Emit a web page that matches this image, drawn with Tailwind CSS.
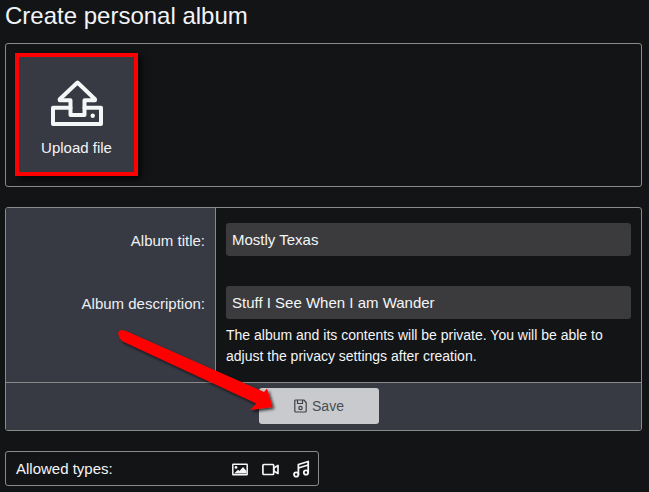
<!DOCTYPE html>
<html><head><meta charset="utf-8">
<script src="https://cdn.jsdelivr.net/npm/@tailwindcss/browser@4"></script>
</head>
<body class="bg-[#131416] m-0">
<div class="relative w-[649px] h-[492px] overflow-hidden bg-[#131416] font-['Liberation_Sans',Arial,sans-serif] text-white">
  <div class="h-[43px] pl-[5px] pt-[1px] text-[24px] leading-[29px] text-[#f2f4f7]">Create personal album</div>

  <section class="ml-[5px] w-[637px] h-[144px] border border-[#8a8a8a] rounded-[3px] p-[9px]">
    <div class="w-[123px] h-[123px] border-4 border-[#ff0000] bg-[#373943] shadow-[3px_3px_6px_rgba(0,0,0,0.8)] flex flex-col items-center">
      <svg class="mt-[23px]" width="52" height="46" viewBox="0 0 52 46" fill="none" stroke="#f4f6f8" stroke-width="4" stroke-linejoin="round" stroke-linecap="round">
        <path d="M19.500 27.700H2V44H50V27.700H33.500"/>
        <path d="M26.500 2.500 L44 19.300 V20.300 H33.500 V35 H19.500 V20.300 H8.700 V19.300 Z"/>
        <circle cx="41.700" cy="35.700" r="2.200" fill="#f4f6f8" stroke="none"/>
      </svg>
      <div class="mt-[11px] text-[15px] leading-[21px] text-[#f2f4f7]">Upload file</div>
    </div>
  </section>

  <section class="ml-[5px] mt-[20px] w-[637px] h-[224px] border border-[#8a8a8a] rounded-[3px] overflow-hidden flex flex-col">
    <div class="flex h-[175px] shrink-0 border-b border-[#8a8a8a]">
      <div class="w-[210px] bg-[#373943] border-r border-[#8a8a8a] pr-[10px] text-right text-[15px] leading-[21px] text-[#eef0f3]">
        <div class="pt-[22px]">Album title:</div>
        <div class="pt-[42px]">Album description:</div>
      </div>
      <div class="flex-1 pl-[10px] pr-[10px] pt-[15px]">
        <div class="h-[33px] bg-[#3b3b3d] rounded-[3px] pl-[6px] text-[15px] leading-[34px] text-[#f4f6f8]">Mostly Texas</div>
        <div class="mt-[30px] h-[33px] bg-[#3b3b3d] rounded-[3px] pl-[6px] text-[15px] leading-[34px] text-[#f4f6f8]">Stuff I See When I am Wander</div>
        <p class="mt-[6px] text-[14px] leading-[21px] text-[#f4f6f8]">The album and its contents will be private. You will be able to adjust the privacy settings after creation.</p>
      </div>
    </div>
    <div class="flex-1 bg-[#373943] pl-[253px] pt-[5px]">
      <div class="w-[120px] h-[36px] bg-[#c8cacd] rounded-[3px] flex items-center justify-center gap-[5px] text-[14px] text-[#4b4d52]">
        <svg width="13" height="14" viewBox="0 0 13 14" fill="none" stroke="#3f4146" stroke-width="1.200" stroke-linejoin="round">
          <path d="M0.800 2a1 1 0 0 1 1-1h8L12.200 3.500V12a1 1 0 0 1-1 1H1.800a1 1 0 0 1-1-1Z"/>
          <path d="M3.500 1v3.500h5V1"/>
          <circle cx="6.500" cy="9" r="1.700"/>
        </svg>
        <span>Save</span>
      </div>
    </div>
  </section>

  <section class="ml-[5px] mt-[20px] w-[314px] h-[35px] border border-[#8a8a8a] rounded-[3px] flex items-center pl-[10px] pt-[1px] text-[15px] text-[#f4f6f8]">
    <span>Allowed types:</span>
    <div class="ml-[119px] flex items-center gap-[14px]">
      <svg width="16" height="13" viewBox="0 0 16 13" fill="none" stroke="#f4f6f8" stroke-width="1.500">
        <rect x="0.800" y="1.200" width="14.400" height="10.600" rx="0.500"/>
        <circle cx="4" cy="4.400" r="1.400" fill="#f4f6f8" stroke="none"/>
        <path d="M2 10.500 6 6.800l1.500 1.200L11 4l3.500 4v2.500Z" fill="#f4f6f8" stroke="none"/>
      </svg>
      <svg width="17" height="13" viewBox="0 0 17 13" fill="none" stroke="#f4f6f8" stroke-width="1.700" stroke-linejoin="round">
        <rect x="0.900" y="1.500" width="10.800" height="10" rx="1"/>
        <path d="M11.800 5 16 2.500V10.500L11.800 8Z"/>
      </svg>
      <svg width="17" height="18" viewBox="0 0 17 18" fill="none" stroke="#f4f6f8" stroke-width="1.800" stroke-linejoin="round">
        <circle cx="3.200" cy="14.500" r="2.200"/>
        <circle cx="13" cy="12.500" r="2.200"/>
        <path d="M5.400 14.500V4.500L15.200 1.500V12.500"/>
        <path d="M5.400 8 15.200 5"/>
      </svg>
    </div>
  </section>

  <svg class="absolute left-0 top-0 pointer-events-none" width="649" height="492" viewBox="0 0 649 492">
    <defs><filter id="s" x="-20%" y="-20%" width="140%" height="140%"><feDropShadow dx="2" dy="2" stdDeviation="1.500" flood-color="#000" flood-opacity="0.750"/></filter></defs>
    <path filter="url(#s)" fill="#ff0000" d="M118.500 335 Q117.500 330.500 122 330 Q124 330 127 331.500 L264 392 L267 388.500 L272.500 407 L250 410 L256.500 403.500 L122 341 Q119 338 118.500 335 Z"/>
  </svg>
</div>
</body></html>
